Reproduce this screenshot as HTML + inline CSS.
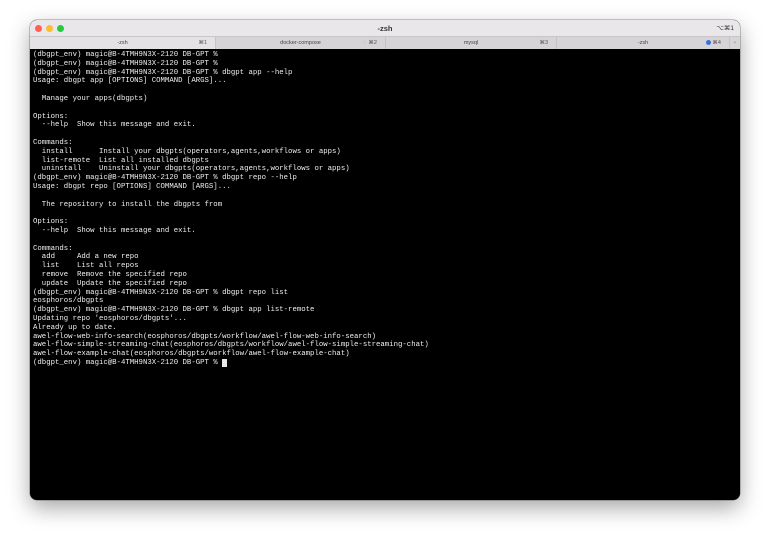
<!DOCTYPE html>
<html><head><meta charset="utf-8"><style>
html,body{margin:0;padding:0;background:#fff;width:771px;height:541px;overflow:hidden}
.win{position:absolute;left:30px;top:20px;width:710px;height:480px;border-radius:7px;overflow:hidden;background:#000;box-shadow:0 8px 22px rgba(0,0,0,.35),0 0 0 0.5px rgba(0,0,0,.4)}
.tb{position:absolute;left:0;top:0;width:710px;height:16px;background:#e9e7e9;font:600 7.5px "Liberation Sans",sans-serif;color:#333}
.dot{position:absolute;top:5px;width:7px;height:7px;border-radius:50%}
.tabs{position:absolute;left:0;top:16px;width:710px;height:13px;background:#d6d4d6;border-top:1px solid #c8c6c8;box-sizing:border-box;font:5.5px "Liberation Sans",sans-serif;color:#444}
.tab{position:absolute;top:0;height:12px;line-height:12px;text-align:center;border-left:1px solid #c4c2c4;box-sizing:border-box}
.k{position:absolute;right:8px;top:0;font-size:5.5px;color:#555}
pre{position:absolute;left:3px;top:31px;margin:0;font:7.33px/8.8px "Liberation Mono",monospace;color:#f0f0f0}
.cur{display:inline-block;width:4.4px;height:8px;background:#e8e8e8;vertical-align:top;margin-top:0.5px}
</style></head><body>
<div class="win">
<div class="tb">
<div class="dot" style="left:5px;background:#fe5f57"></div>
<div class="dot" style="left:16px;background:#febc2e"></div>
<div class="dot" style="left:27px;background:#28c840"></div>
<div style="position:absolute;left:0;width:710px;top:4px;text-align:center">-zsh</div>
<div style="position:absolute;right:6px;top:4px;font-weight:400;font-size:6.5px">⌥⌘1</div>
</div>
<div class="tabs">
<div class="tab" style="left:0;width:185px;background:#e4e2e4;border-left:none">-zsh<span class="k">⌘1</span></div>
<div class="tab" style="left:185px;width:170px">docker-compose<span class="k"><span style="color:#aaa">⁘</span> ⌘2</span></div>
<div class="tab" style="left:355px;width:171px">mysql<span class="k">⌘3</span></div>
<div class="tab" style="left:526px;width:173px">-zsh<span class="k"><span style="display:inline-block;width:5px;height:5px;border-radius:50%;background:#3b6fe0;vertical-align:-0.5px"></span> ⌘4</span></div>
<div class="tab" style="left:699px;width:11px;color:#999">+</div>
</div>
<pre>(dbgpt_env) magic@B-4TMH9N3X-2120 DB-GPT %
(dbgpt_env) magic@B-4TMH9N3X-2120 DB-GPT %
(dbgpt_env) magic@B-4TMH9N3X-2120 DB-GPT % dbgpt app --help
Usage: dbgpt app [OPTIONS] COMMAND [ARGS]...

  Manage your apps(dbgpts)

Options:
  --help  Show this message and exit.

Commands:
  install      Install your dbgpts(operators,agents,workflows or apps)
  list-remote  List all installed dbgpts
  uninstall    Uninstall your dbgpts(operators,agents,workflows or apps)
(dbgpt_env) magic@B-4TMH9N3X-2120 DB-GPT % dbgpt repo --help
Usage: dbgpt repo [OPTIONS] COMMAND [ARGS]...

  The repository to install the dbgpts from

Options:
  --help  Show this message and exit.

Commands:
  add     Add a new repo
  list    List all repos
  remove  Remove the specified repo
  update  Update the specified repo
(dbgpt_env) magic@B-4TMH9N3X-2120 DB-GPT % dbgpt repo list
eosphoros/dbgpts
(dbgpt_env) magic@B-4TMH9N3X-2120 DB-GPT % dbgpt app list-remote
Updating repo 'eosphoros/dbgpts'...
Already up to date.
awel-flow-web-info-search(eosphoros/dbgpts/workflow/awel-flow-web-info-search)
awel-flow-simple-streaming-chat(eosphoros/dbgpts/workflow/awel-flow-simple-streaming-chat)
awel-flow-example-chat(eosphoros/dbgpts/workflow/awel-flow-example-chat)
(dbgpt_env) magic@B-4TMH9N3X-2120 DB-GPT % <span class="cur"></span></pre>
</div>
</body></html>
